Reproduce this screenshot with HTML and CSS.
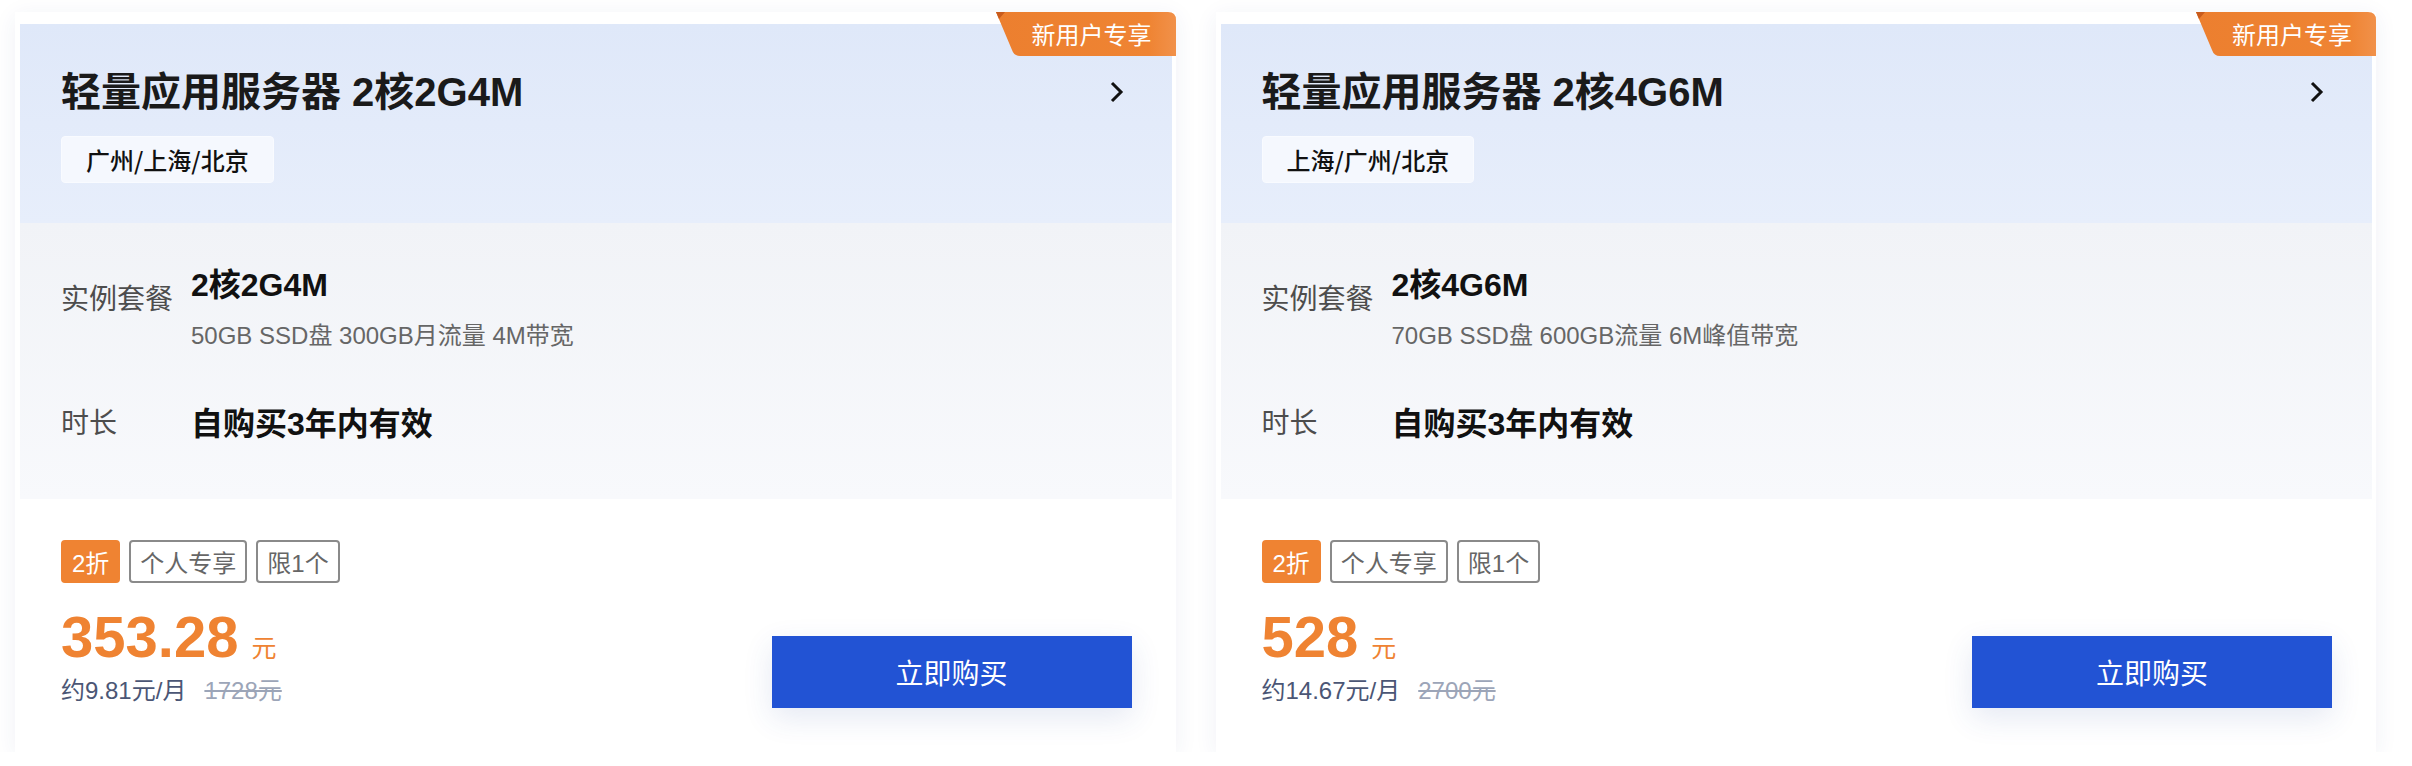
FILE: index.html
```html
<!DOCTYPE html>
<html lang="zh-CN">
<head>
<meta charset="utf-8">
<title>轻量应用服务器</title>
<link rel="stylesheet" href="styles.css">
</head>
<body>
<div class="cards">
  <div class="card">
    <span class="badge">
      <svg class="badge-bg" width="180" height="44" viewBox="0 0 180 44"><defs><linearGradient id="bg1" x1="0" x2="1" y1="0" y2="0"><stop offset="0" stop-color="#ec7f2f"/><stop offset="0.85" stop-color="#ef8433"/><stop offset="1" stop-color="#f1914a"/></linearGradient></defs><path d="M0 0 H172 Q180 0 180 8 V44 H24 Q18 44 16 38 Z" fill="url(#bg1)"/><path d="M0 0 H9 L3 7 Z" fill="#c95c1d"/></svg>
      <span class="badge-text">新用户专享</span>
    </span>
    <div class="card-head">
      <div class="title-row">
        <h2 class="title">轻量应用服务器 2核2G4M</h2>
        <svg class="chev" width="14" height="22" viewBox="0 0 14 22"><polyline points="2,2 11,11 2,20" fill="none" stroke="#111" stroke-width="3" stroke-linejoin="miter"/></svg>
      </div>
      <span class="region">广州/上海/北京</span>
    </div>
    <div class="card-body">
      <div class="row">
        <span class="label label-top">实例套餐</span>
        <div class="value-block">
          <div class="value">2核2G4M</div>
          <div class="spec">50GB SSD盘 300GB月流量 4M带宽</div>
        </div>
      </div>
      <div class="row row-gap">
        <span class="label">时长</span>
        <div class="value">自购买3年内有效</div>
      </div>
    </div>
    <div class="card-foot">
      <div class="price-block">
        <div class="tags">
          <span class="tag tag-hot">2折</span>
          <span class="tag">个人专享</span>
          <span class="tag">限1个</span>
        </div>
        <div class="price"><span class="num">353.28</span><span class="unit">元</span></div>
        <div class="sub"><span class="monthly">约9.81元/月</span><span class="orig">1728元</span></div>
      </div>
      <button class="buy">立即购买</button>
    </div>
  </div>

  <div class="card">
    <span class="badge">
      <svg class="badge-bg" width="180" height="44" viewBox="0 0 180 44"><defs><linearGradient id="bg2" x1="0" x2="1" y1="0" y2="0"><stop offset="0" stop-color="#ec7f2f"/><stop offset="0.85" stop-color="#ef8433"/><stop offset="1" stop-color="#f1914a"/></linearGradient></defs><path d="M0 0 H172 Q180 0 180 8 V44 H24 Q18 44 16 38 Z" fill="url(#bg2)"/><path d="M0 0 H9 L3 7 Z" fill="#c95c1d"/></svg>
      <span class="badge-text">新用户专享</span>
    </span>
    <div class="card-head">
      <div class="title-row">
        <h2 class="title">轻量应用服务器 2核4G6M</h2>
        <svg class="chev" width="14" height="22" viewBox="0 0 14 22"><polyline points="2,2 11,11 2,20" fill="none" stroke="#111" stroke-width="3" stroke-linejoin="miter"/></svg>
      </div>
      <span class="region">上海/广州/北京</span>
    </div>
    <div class="card-body">
      <div class="row">
        <span class="label label-top">实例套餐</span>
        <div class="value-block">
          <div class="value">2核4G6M</div>
          <div class="spec">70GB SSD盘 600GB流量 6M峰值带宽</div>
        </div>
      </div>
      <div class="row row-gap">
        <span class="label">时长</span>
        <div class="value">自购买3年内有效</div>
      </div>
    </div>
    <div class="card-foot">
      <div class="price-block">
        <div class="tags">
          <span class="tag tag-hot">2折</span>
          <span class="tag">个人专享</span>
          <span class="tag">限1个</span>
        </div>
        <div class="price"><span class="num">528</span><span class="unit">元</span></div>
        <div class="sub"><span class="monthly">约14.67元/月</span><span class="orig">2700元</span></div>
      </div>
      <button class="buy">立即购买</button>
    </div>
  </div>
</div>
</body>
</html>
```

FILE: styles.css
```css
* { box-sizing: border-box; }

html, body {
  margin: 0;
  background: #ffffff;
}

body {
  padding: 0 0 0 15px;
  font-family: "Liberation Sans", "Noto Sans CJK SC", sans-serif;
  color: #1a1a1a;
}

.cards {
  width: 2361px;
  display: grid;
  grid-template-columns: 1fr 1fr;
  column-gap: 40px;
}

.card {
  position: relative;
  background: #fff;
  margin-top: 12px;
  padding: 12px 4px 0 5px;
  box-shadow: 0 4px 22px rgba(40, 60, 130, 0.07);
}

.badge {
  position: absolute;
  top: 0;
  right: 0;
  width: 180px;
  height: 44px;
  display: flex;
  align-items: center;
  justify-content: flex-end;
  padding-right: 24px;
}

.badge-bg {
  position: absolute;
  left: 0;
  top: 0;
  display: block;
}

.badge-text {
  position: relative;
  color: #fff;
  font-family: "Noto Sans CJK SC", sans-serif;
  font-size: 24px;
  line-height: 44px;
}

.card-head {
  padding: 40px 40px 40px 41px;
  background: linear-gradient(180deg, #dfe8f9 0%, #e7eefb 100%);
  display: flex;
  flex-direction: column;
  align-items: flex-start;
}

.title-row {
  align-self: stretch;
  display: flex;
  align-items: center;
  justify-content: space-between;
  height: 56px;
}

.title {
  margin: 0;
  font-size: 40px;
  line-height: 56px;
  font-weight: 600;
  color: #1a1a1a;
}

.chev {
  display: block;
  margin-right: 8px;
}

.region {
  margin-top: 16px;
  height: 47px;
  padding: 0 24px;
  display: flex;
  align-items: center;
  background: #f5f8fe;
  border: 1px solid #f9fbff;
  border-radius: 4px;
  font-family: "Noto Sans CJK SC", sans-serif;
  font-size: 24px;
  font-weight: 500;
  color: #111;
}

.card-body {
  padding: 40px 40px 53px 41px;
  background: linear-gradient(180deg, #f1f3f7 0%, #f8f9fc 100%);
}

.row {
  display: flex;
  align-items: flex-start;
}

.row-gap {
  margin-top: 48px;
}

.label {
  width: 130px;
  flex: none;
  font-size: 28px;
  line-height: 44px;
  color: #4d4d4d;
}

.label-top {
  margin-top: 15px;
}

.value {
  font-size: 32px;
  line-height: 44px;
  font-weight: 600;
  color: #111;
}

.spec {
  margin-top: 11px;
  font-size: 24px;
  line-height: 36px;
  color: #666;
}

.card-foot {
  padding: 41px 40px 44px 41px;
  display: flex;
  justify-content: space-between;
  align-items: flex-end;
  background: #fff;
}

.price-block {
  display: flex;
  flex-direction: column;
  align-items: flex-start;
}

.tags {
  display: flex;
  gap: 9px;
}

.tag {
  height: 43px;
  padding: 0 9px;
  display: flex;
  align-items: center;
  border: 2px solid #8a8a8a;
  border-radius: 4px;
  font-size: 24px;
  color: #666;
}

.tag-hot {
  background: #ef8332;
  border-color: #ef8332;
  color: #fff;
}

.price {
  margin-top: 25px;
  display: flex;
  align-items: baseline;
  height: 58px;
  color: #ef8332;
}

.num {
  font-size: 58px;
  line-height: 58px;
  font-weight: 600;
}

.unit {
  margin-left: 13px;
  font-size: 25px;
  line-height: 58px;
}

.sub {
  margin-top: 8px;
  height: 34px;
  display: flex;
  align-items: center;
  font-size: 24px;
  line-height: 34px;
}

.monthly {
  color: #4b5675;
}

.orig {
  margin-left: 18px;
  color: #9ca5b8;
  text-decoration: line-through;
}

.buy {
  width: 360px;
  height: 72px;
  margin-bottom: 0;
  border: none;
  border-radius: 0;
  background: #2253d4;
  color: #fff;
  font-family: "Noto Sans CJK SC", sans-serif;
  font-size: 28px;
  box-shadow: 0 10px 30px rgba(40, 70, 160, 0.12);
  cursor: pointer;
}
```
